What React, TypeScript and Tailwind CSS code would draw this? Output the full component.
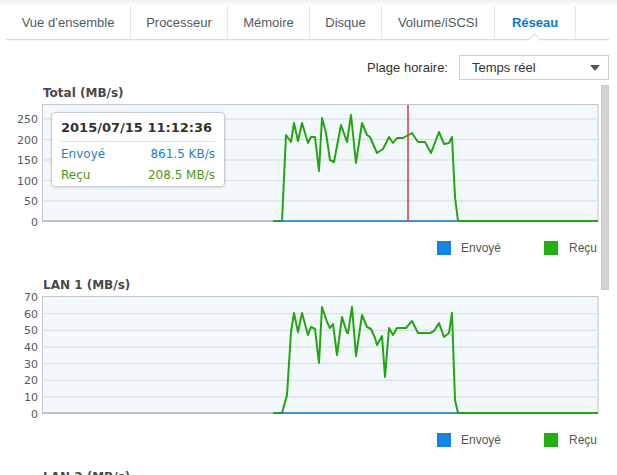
import React from 'react';

const tabs = [
    { label: 'Vue d\u2019ensemble', w: 'w-[125px]' },
    { label: 'Processeur', w: 'w-[97px]' },
    { label: 'Mémoire', w: 'w-[82px]' },
    { label: 'Disque', w: 'w-[72px]' },
    { label: 'Volume/iSCSI', w: 'w-[113px]' },
    { label: 'Réseau', w: 'w-[81px]', active: true },
];

const GREEN = '#23a512';
const BLUE = '#1a7fd8';

const totalRecv =
    '273,120 282,120 286,34 291,41 294,22 298,40 302,22 308,42 311,36 315,36 319,70 322,17 326,32 330,59 334,61 341,24 347,41 351,14 356,62 362,22 367,34 370,36 377,52 383,48 389,36 393,42 397,37 403,37 412,32 418,41 425,41 431,52 439,31 444,43 449,42 452,36 455,96 458,120 598,120';

const lanRecv =
    '273,120 282,120 287,102 291,39 294,20 298,39 302,20 308,42 311,34 315,36 319,70 322,14 327,29 330,35 333,31 337,62 342,24 347,40 348,40 352,14 356,63 362,22 367,34 371,36 375,45 377,52 382,43 385,84 389,35 393,42 397,35 406,35 412,28 418,40 430,40 434,38 439,30 444,44 449,40 452,20 455,107 458,120 598,120';

type ChartProps = {
    ticks: number[];
    scale: number;
    recv: string;
    cursor?: number;
};

const Chart = ({ ticks, scale, recv, cursor }: ChartProps) => (
    <svg width="600" height="127" className="block overflow-visible">
        <rect x="42.5" y="3.5" width="555.5" height="116.5" fill="#f3f8fc" stroke="#bfc8d1" />
        {ticks.map((t) => {
            const y = 120 - t * scale;
            return (
                <g key={t}>
                    {t > 0 && y > 4 && (
                        <line x1="43" x2="597.5" y1={y + 0.5} y2={y + 0.5} stroke="#d5dbe1" />
                    )}
                    <text
                        x="38"
                        y={y + 4.5}
                        textAnchor="end"
                        fontSize="11"
                        fill="#5a5a5a"
                        fontFamily="'DejaVu Sans', Verdana, sans-serif"
                    >
                        {t}
                    </text>
                </g>
            );
        })}
        <line x1="42.5" x2="598" y1="120" y2="120" stroke="#9aa6b2" />
        <polyline points={recv} fill="none" stroke={GREEN} strokeWidth="2" strokeLinejoin="round" />
        <line x1="280" x2="458" y1="120" y2="120" stroke={BLUE} strokeWidth="1.5" />
        {cursor && <line x1={cursor} x2={cursor} y1="4" y2="120" stroke="#e0393d" strokeWidth="1.5" />}
    </svg>
);

const Legend = () => (
    <div className="flex items-center justify-end h-[14px] mt-[13px] pr-[3px] text-[12px] text-[#555]">
        <span className="w-[14px] h-[14px] bg-[#1683e0]" />
        <span className="ml-[10px] w-[42px]">Envoyé</span>
        <span className="ml-[41px] w-[14px] h-[14px] bg-[#22b00e]" />
        <span className="ml-[11px]">Reçu</span>
    </div>
);

const Title = ({ children }: { children: React.ReactNode }) => (
    <div className="h-[16px] leading-[16px] pl-[43px] text-[12px] font-bold text-[#484848] font-['DejaVu_Sans',Verdana,sans-serif]">
        {children}
    </div>
);

export default function App() {
    return (
        <div className="w-[617px] h-[475px] overflow-hidden bg-white font-['Liberation_Sans',Arial,sans-serif]">
            <div className="h-[6px] bg-gradient-to-b from-[#edf2f7] to-white" />

            <div className="flex h-[34px] ml-[6px] mr-[8px] border-b border-[#d6dce2] shadow-[0_1px_1px_rgba(0,0,0,0.04)]">
                {tabs.map((t) => (
                    <div
                        key={t.label}
                        className={`${t.w} relative flex items-center justify-center border-r border-[#e4e7ea] text-[13px] ${
                            t.active ? 'font-bold text-[#0b78d0]' : 'text-[#505a63]'
                        }`}
                    >
                        {t.label}
                        {t.active && (
                            <span className="absolute bottom-[-5px] left-1/2 -ml-[5px] w-[9px] h-[9px] rotate-45 bg-white border-l border-t border-[#d6dce2]" />
                        )}
                    </div>
                ))}
            </div>

            <div className="flex items-center justify-end mt-[15px] mr-[8px] h-[25px]">
                <span className="text-[13px] text-[#333]">Plage horaire:</span>
                <div className="ml-[11px] w-[150px] h-[25px] border border-[#c9ced4] flex items-center pl-[12px] pr-[8px] text-[13px] text-[#333]">
                    <span className="flex-1">Temps réel</span>
                    <svg width="10" height="6" viewBox="0 0 10 6">
                        <path d="M0 0 L10 0 L5 6 Z" fill="#555" />
                    </svg>
                </div>
            </div>

            <div className="flex mt-[5px]">
                <div className="w-[600px]">
                    <div className="h-[192px]">
                        <Title>Total (MB/s)</Title>
                        <div className="relative">
                            <Chart ticks={[0, 50, 100, 150, 200, 250]} scale={0.41} recv={totalRecv} cursor={408} />
                            <div className="absolute left-[51px] top-[11px] w-[174px] h-[75px] bg-white/95 border border-[#c3ccd5] rounded-[4px] shadow-[0_1px_3px_rgba(0,0,0,0.12)] px-[9px] font-['DejaVu_Sans',Verdana,sans-serif]">
                                <div className="h-[29px] pt-[7px] text-[13px] font-bold text-[#333] border-b border-[#dde2e6] leading-[16px]">
                                    2015/07/15 11:12:36
                                </div>
                                <div className="flex justify-between mt-[3px] text-[12px] leading-[18px] text-[#2a7dc9]">
                                    <span>Envoyé</span>
                                    <span>861.5 KB/s</span>
                                </div>
                                <div className="flex justify-between mt-[3px] text-[12px] leading-[18px] text-[#4c9a16]">
                                    <span>Reçu</span>
                                    <span>208.5 MB/s</span>
                                </div>
                            </div>
                        </div>
                        <Legend />
                    </div>
                    <div className="h-[192px]">
                        <Title>LAN 1 (MB/s)</Title>
                        <Chart ticks={[0, 10, 20, 30, 40, 50, 60, 70]} scale={116.5 / 70} recv={lanRecv} />
                        <Legend />
                    </div>
                    <Title>LAN 2 (MB/s)</Title>
                </div>
                <div className="ml-[1px] w-[8px] h-[205px] bg-[#d4d4d4] border border-[#cacaca]" />
            </div>
        </div>
    );
}
